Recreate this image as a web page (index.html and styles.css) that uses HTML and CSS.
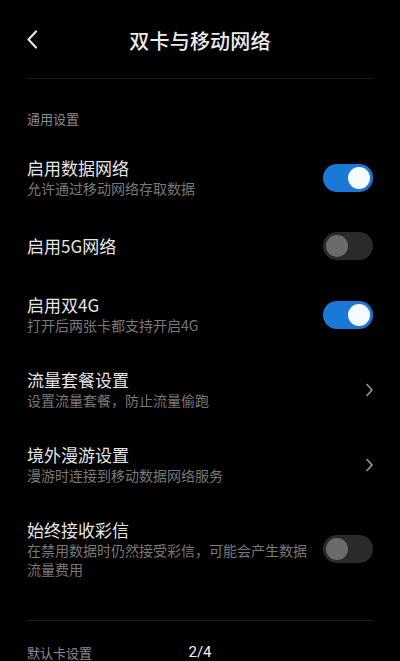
FILE: index.html
```html
<!DOCTYPE html>
<html lang="zh">
<head>
<meta charset="utf-8">
<link rel="stylesheet" href="styles.css">
</head>
<body>
<div class="screen">
  <header class="topbar">
    <svg class="back" width="12" height="19" viewBox="0 0 12 19"><path d="M10 1.5 L2.5 9.5 L10 17.5" fill="none" stroke="#e6e6e6" stroke-width="2.2" stroke-linecap="round" stroke-linejoin="round"/></svg>
    <h1 class="title">双卡与移动网络</h1>
  </header>
  <div class="divider"></div>

  <div class="section-label">通用设置</div>

  <div class="row">
    <div class="text">
      <div class="row-title">启用数据网络</div>
      <div class="row-sub">允许通过移动网络存取数据</div>
    </div>
    <div class="toggle on"><span class="knob"></span></div>
  </div>

  <div class="row">
    <div class="text">
      <div class="row-title">启用5G网络</div>
    </div>
    <div class="toggle"><span class="knob"></span></div>
  </div>

  <div class="row">
    <div class="text">
      <div class="row-title">启用双4G</div>
      <div class="row-sub">打开后两张卡都支持开启4G</div>
    </div>
    <div class="toggle on"><span class="knob"></span></div>
  </div>

  <div class="row">
    <div class="text">
      <div class="row-title">流量套餐设置</div>
      <div class="row-sub">设置流量套餐，防止流量偷跑</div>
    </div>
    <svg class="chev" width="9" height="14" viewBox="0 0 9 14"><path d="M2 1.5 L7 7 L2 12.5" fill="none" stroke="#9a9a9a" stroke-width="1.6" stroke-linecap="round" stroke-linejoin="round"/></svg>
  </div>

  <div class="row">
    <div class="text">
      <div class="row-title">境外漫游设置</div>
      <div class="row-sub">漫游时连接到移动数据网络服务</div>
    </div>
    <svg class="chev" width="9" height="14" viewBox="0 0 9 14"><path d="M2 1.5 L7 7 L2 12.5" fill="none" stroke="#9a9a9a" stroke-width="1.6" stroke-linecap="round" stroke-linejoin="round"/></svg>
  </div>

  <div class="row">
    <div class="text">
      <div class="row-title">始终接收彩信</div>
      <div class="row-sub">在禁用数据时仍然接受彩信，可能会产生数据流量费用</div>
    </div>
    <div class="toggle"><span class="knob"></span></div>
  </div>

  <div class="divider lower"></div>
  <div class="section-label next">默认卡设置</div>

  <div class="pager">2/4</div>
</div>
</body>
</html>
```

FILE: styles.css
```css
* { box-sizing: border-box; }
html, body {
  margin: 0;
  padding: 0;
  background: #000;
}
body {
  width: 400px;
  height: 661px;
  overflow: hidden;
  font-family: "Noto Sans CJK SC", "Noto Sans", sans-serif;
  color: #e6e6e6;
}
.screen {
  position: relative;
  width: 400px;
  height: 661px;
  overflow: hidden;
}
.topbar {
  height: 78px;
  display: flex;
  align-items: center;
  justify-content: center;
  position: relative;
  padding-top: 2px;
}
.back {
  position: absolute;
  left: 26px;
  top: 30px;
}
.title {
  margin: 0;
  font-size: 20px;
  font-weight: 500;
  color: #ececec;
  letter-spacing: 0.2px;
}
.divider {
  height: 1px;
  margin: 0 27px;
  background: #1b1b1b;
}
.divider.lower {
  margin-top: 24px;
}
.section-label {
  font-size: 13px;
  line-height: 18px;
  color: #8a8a8a;
  padding: 31px 27px 12px;
}
.section-label.next {
  padding-top: 24px;
  line-height: 16px;
}
.row {
  display: flex;
  align-items: center;
  padding: 17px 27px;
}
.text {
  flex: 1;
  min-width: 0;
  margin-right: 12px;
}
.row-title {
  font-size: 17px;
  line-height: 22px;
  color: #e6e6e6;
}
.row-sub {
  font-size: 14px;
  line-height: 19px;
  color: #787878;
}
.toggle {
  flex: none;
  width: 50px;
  height: 28px;
  border-radius: 14px;
  background: #2a2a2a;
  position: relative;
}
.toggle .knob {
  position: absolute;
  top: 3px;
  left: 3px;
  width: 22px;
  height: 22px;
  border-radius: 50%;
  background: #6b6b6b;
}
.toggle.on {
  background: #1a78d6;
}
.toggle.on .knob {
  left: 25px;
  background: #f6fbff;
}
.chev {
  flex: none;
  margin-right: -1px;
}
.pager {
  position: absolute;
  left: 0;
  right: 0;
  top: 645px;
  text-align: center;
  font-family: "Roboto", "Liberation Sans", sans-serif;
  font-size: 15px;
  line-height: 15px;
  color: #f0f0f0;
}
```
